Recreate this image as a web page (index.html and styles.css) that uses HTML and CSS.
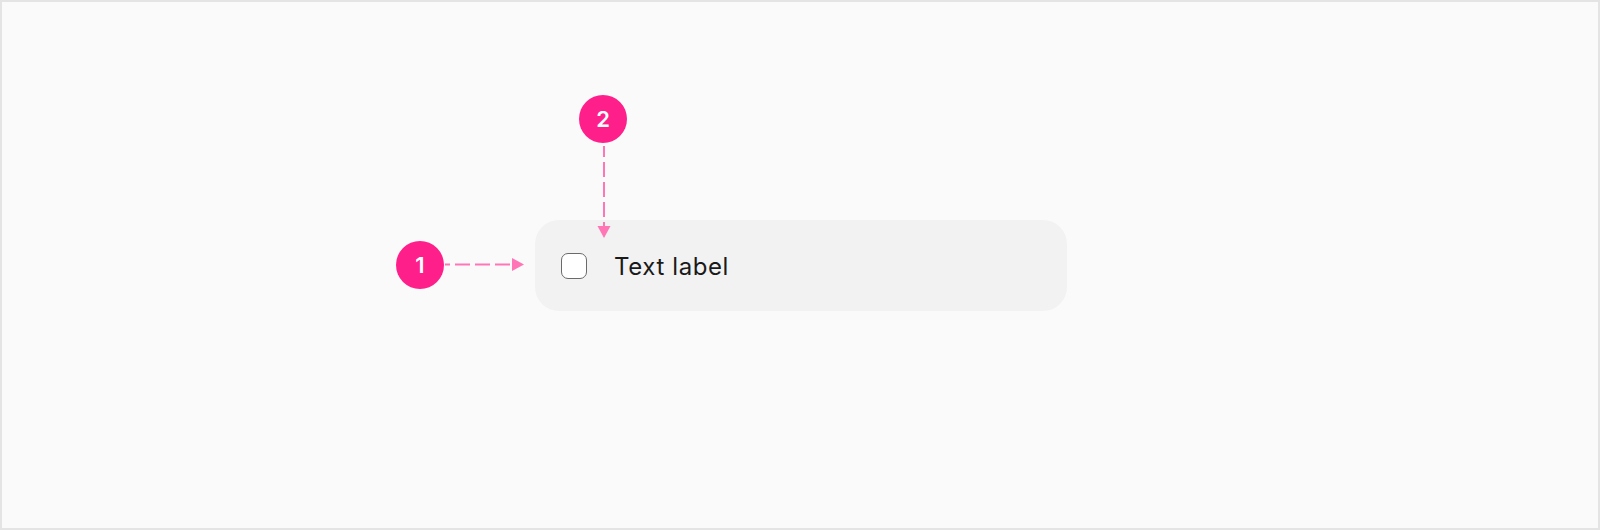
FILE: index.html
```html
<!DOCTYPE html>
<html lang="en">

<head>
    <meta charset="UTF-8">
    <meta name="viewport" content="width=device-width, initial-scale=1.0">
    <title>Checkbox anatomy</title>
    <link rel="stylesheet" href="styles.css">
</head>

<body>
    <div class="frame">
        <div class="list-item">
            <span class="checkbox"></span>
            <span class="label">Text label</span>
        </div>

        <!-- annotation arrows -->
        <svg class="arrows" width="1600" height="530" viewBox="0 0 1600 530">
            <line x1="445" y1="264.5" x2="512" y2="264.5" class="dash" stroke-dashoffset="10" />
            <polygon points="512,258 524,264.5 512,271" class="head" />
            <line x1="604" y1="146" x2="604" y2="227" class="dash" stroke-dashoffset="4" />
            <polygon points="597.5,226 610.5,226 604,238" class="head" />
        </svg>

        <span class="badge badge-1">1</span>
        <span class="badge badge-2">2</span>
    </div>
</body>

</html>
```

FILE: styles.css
```css
:root {
    --frame-bg: #fafafa;
    --frame-border: #e4e4e4;
    --item-bg: #f2f2f2;
    --badge-color: #ff1f8a;
    --arrow-color: #ff75b6;
    --text-color: #1a1a1a;
}

html,
body {
    margin: 0;
    padding: 0;
}

body {
    font-family: 'Inter', 'Noto Sans', sans-serif;
    color: var(--text-color);
}

.frame {
    position: relative;
    box-sizing: border-box;
    width: 1600px;
    height: 530px;
    border: 2px solid var(--frame-border);
    background-color: var(--frame-bg);
    padding: 218px 0 0 533px;
}

.list-item {
    display: flex;
    align-items: center;
    gap: 27px;
    box-sizing: border-box;
    width: 532px;
    height: 91px;
    padding-left: 26px;
    background-color: var(--item-bg);
    border-radius: 24px;
}

.checkbox {
    box-sizing: border-box;
    width: 26px;
    height: 26px;
    border: 1.75px solid #6a6a6a;
    border-radius: 7px;
    background-color: white;
}

.label {
    font-size: 24px;
    letter-spacing: 0.6px;
    padding-top: 1px;
}

.arrows {
    position: absolute;
    top: -2px;
    left: -2px;
}

.dash {
    stroke: var(--arrow-color);
    stroke-width: 2;
    stroke-dasharray: 15 5;
}

.head {
    fill: var(--arrow-color);
}

.badge {
    position: absolute;
    display: flex;
    align-items: center;
    justify-content: center;
    width: 48px;
    height: 48px;
    border-radius: 50%;
    background-color: var(--badge-color);
    color: white;
    font-size: 22px;
    font-weight: 600;
}

.badge-1 {
    left: 394px;
    top: 239px;
}

.badge-2 {
    left: 577px;
    top: 93px;
}
```
